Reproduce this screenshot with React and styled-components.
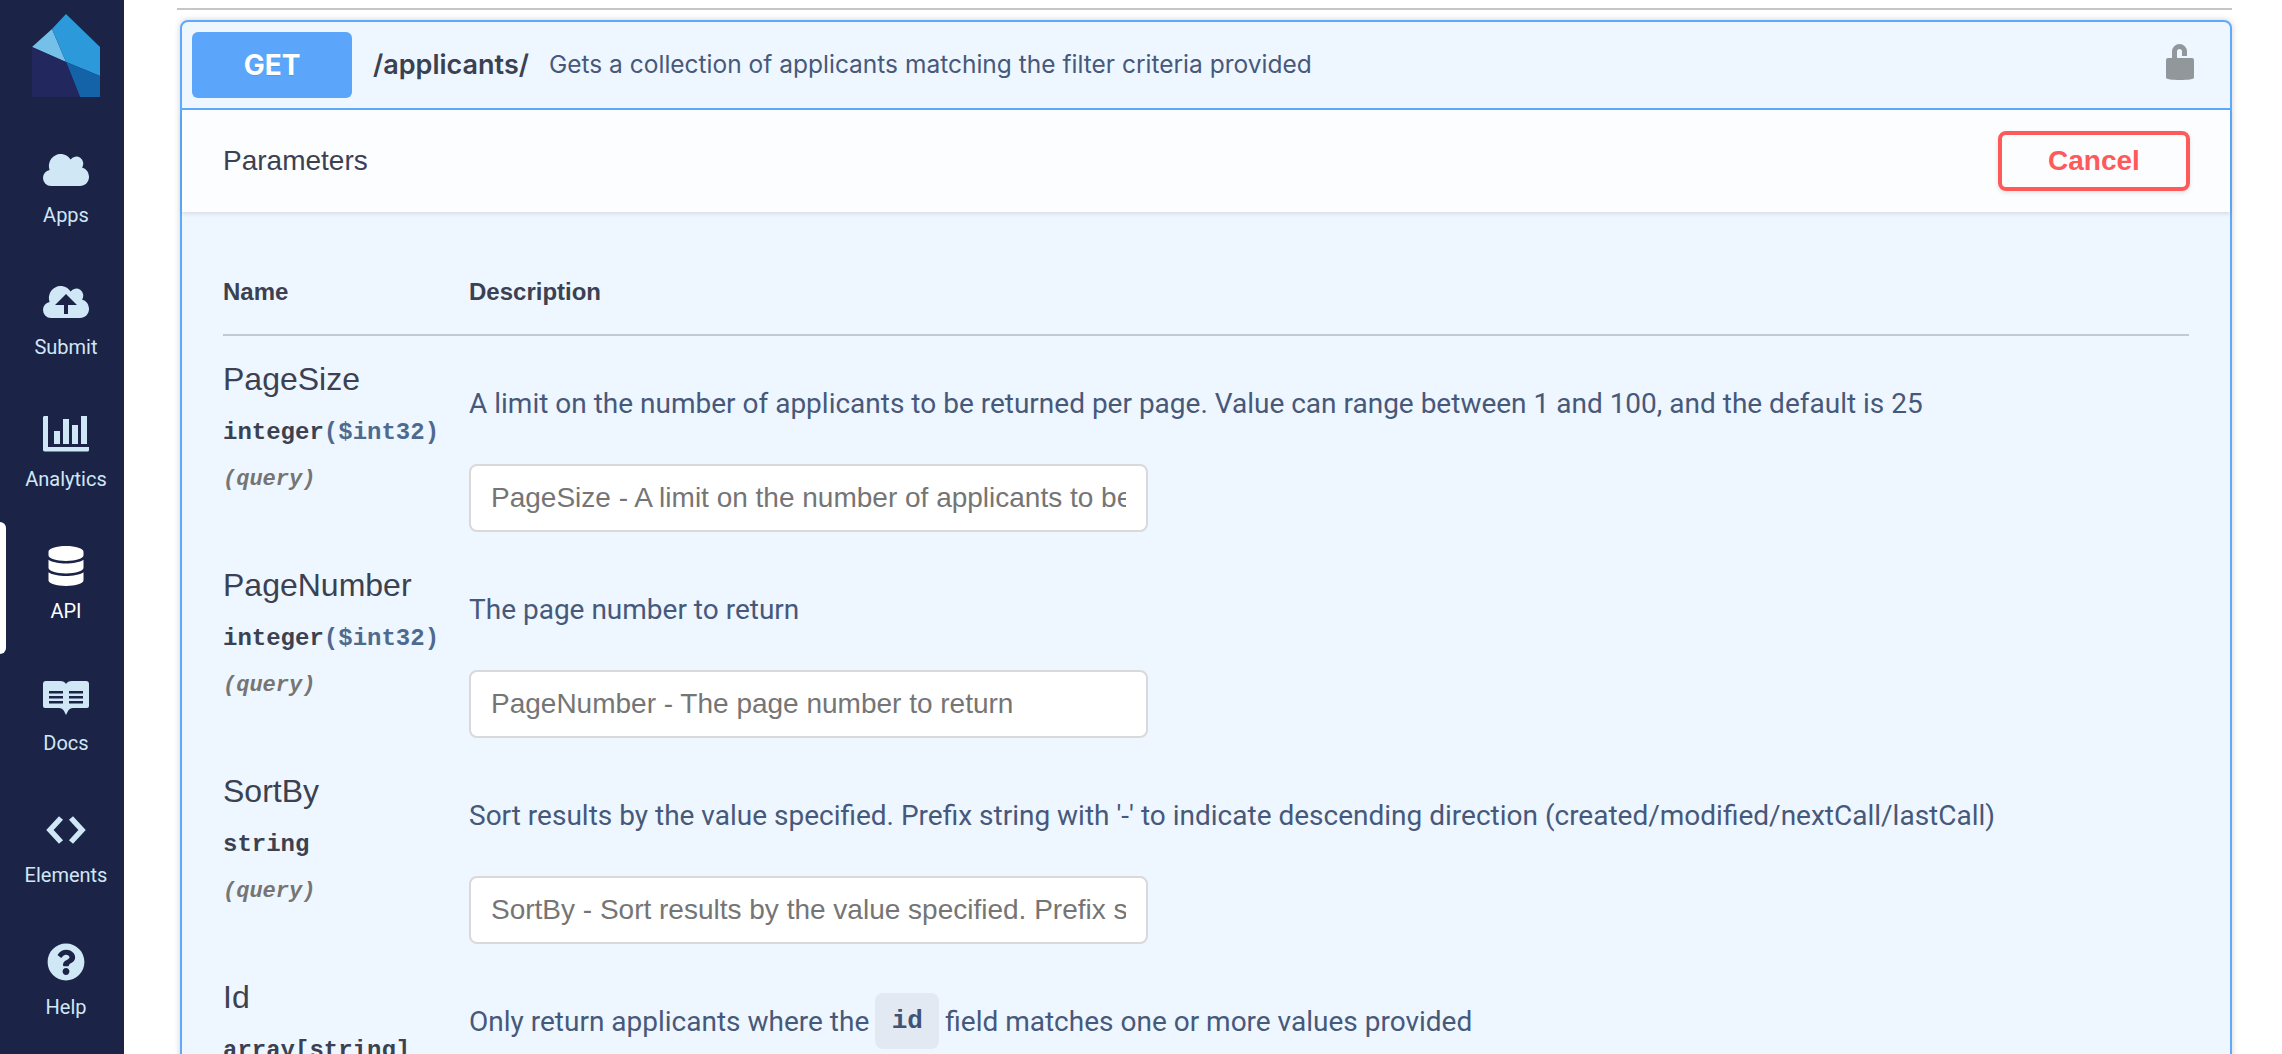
import React from 'react';
import styled, { createGlobalStyle } from 'styled-components';
import { FaDatabase, FaQuestionCircle } from 'react-icons/fa';

const GlobalStyle = createGlobalStyle`
    html, body {
        margin: 0;
        padding: 0;
        height: 100%;
        overflow: hidden;
        background: #fff;
    }
    * {
        box-sizing: border-box;
    }
`

const Page = styled.div`
    display: flex;
    width: 2282px;
    height: 1054px;
    overflow: hidden;
`
const Rail = styled.nav`
    width: 124px;
    flex-shrink: 0;
    background: #1b2347;
    display: flex;
    flex-direction: column;
`
const LogoBox = styled.div`
    height: 126px;
    padding: 14px 0 0 32px;
`
const NavItem = styled.a`
    position: relative;
    height: 132px;
    padding: 24px 0 0 8px;
    display: flex;
    flex-direction: column;
    align-items: center;
    color: ${(p) => (p.$active ? '#ffffff' : '#d0e7f6')};
    font-family: Roboto, sans-serif;
    font-size: 20px;
    &::before {
        content: '';
        display: ${(p) => (p.$active ? 'block' : 'none')};
        position: absolute;
        left: 0;
        top: 0;
        bottom: 0;
        width: 6px;
        background: #fff;
        border-radius: 0 6px 6px 0;
    }
`
const IconBox = styled.div`
    height: 40px;
    display: flex;
    align-items: center;
    justify-content: center;
`
const NavLabel = styled.span`
    margin-top: 13px;
    line-height: 24px;
`
const Main = styled.main`
    flex: 1;
    padding: 8px 50px 0 53px;
    min-width: 0;
`
const TopRule = styled.div`
    height: 2px;
    background: #c6c6c6;
`
const Card = styled.section`
    margin: 10px 0 0 3px;
    height: 1100px;
    border: 2px solid #5fa9fb;
    border-radius: 8px;
    background: #eef6ff;
    box-shadow: 0 0 6px rgba(0, 0, 0, 0.19);
`
const Summary = styled.div`
    height: 88px;
    border-bottom: 2px solid #5fa9fb;
    display: flex;
    align-items: center;
    padding: 0 36px 0 10px;
`
const Method = styled.div`
    width: 160px;
    height: 66px;
    background: #5ba6fb;
    border-radius: 6px;
    color: #fff;
    font-family: Inter, sans-serif;
    font-weight: 700;
    font-size: 28px;
    display: flex;
    align-items: center;
    justify-content: center;
    text-shadow: 0 1px 0 rgba(0, 0, 0, 0.1);
`
const Path = styled.span`
    margin: -2px 0 0 21px;
    font-family: Inter, sans-serif;
    font-weight: 600;
    font-size: 27px;
    color: #3b4151;
`
const SummaryText = styled.span`
    margin: -2px 0 0 20px;
    flex: 1;
    font-family: Inter, sans-serif;
    font-size: 24.5px;
    color: #47597a;
`
const LockBox = styled.div`
    display: flex;
    margin-top: -6px;
`
const SectionBar = styled.div`
    height: 102px;
    background: #fcfdff;
    box-shadow: 0 2px 4px rgba(0, 0, 0, 0.1);
    display: flex;
    align-items: center;
    justify-content: space-between;
    padding: 0 40px 0 41px;
`
const SectionTitle = styled.h4`
    margin: 0;
    font-family: "Liberation Sans", sans-serif;
    font-weight: 400;
    font-size: 28px;
    color: #3b4151;
`
const CancelButton = styled.button`
    width: 192px;
    height: 60px;
    background: transparent;
    border: 4px solid #ff5a5a;
    border-radius: 8px;
    color: #ff5a5a;
    font-family: "Liberation Sans", sans-serif;
    font-weight: 700;
    font-size: 28px;
    box-shadow: 0 2px 4px rgba(0, 0, 0, 0.1);
`
const Body = styled.div`
    padding: 38px 41px 0;
`
const HeadRow = styled.div`
    display: grid;
    grid-template-columns: 246px 1fr;
    height: 86px;
    align-items: center;
    border-bottom: 2px solid #c3c9d1;
    font-family: "Liberation Sans", sans-serif;
    font-weight: 700;
    font-size: 24px;
    color: #3b4151;
`
const ParamRow = styled.div`
    display: grid;
    grid-template-columns: 246px 1fr;
    height: 206px;
    padding-top: 23px;
`
const ParamName = styled.div`
    font-family: "Liberation Sans", sans-serif;
    font-size: 32px;
    line-height: 40px;
    color: #3b4151;
`
const ParamType = styled.div`
    margin-top: 20px;
    font-family: "Liberation Mono", monospace;
    font-weight: 700;
    font-size: 24px;
    line-height: 28px;
    color: #3b4151;
    span {
        color: #4f6a8f;
    }
`
const ParamIn = styled.div`
    margin-top: 19px;
    font-family: "Liberation Mono", monospace;
    font-weight: 700;
    font-style: italic;
    font-size: 22px;
    line-height: 28px;
    color: #757575;
`
const Desc = styled.div`
    margin-top: 18px;
    height: 52px;
    display: flex;
    align-items: center;
    gap: 6px;
    white-space: pre;
    font-family: Roboto, sans-serif;
    font-size: 28px;
    color: #47597a;
`
const Code = styled.code`
    display: inline-flex;
    align-items: center;
    justify-content: center;
    width: 64px;
    height: 56px;
    flex-shrink: 0;
    background: #e3e9f3;
    border-radius: 8px;
    font-family: "Liberation Mono", monospace;
    font-weight: 700;
    font-size: 26px;
    color: #3e5474;
`
const ParamInput = styled.input`
    display: block;
    width: 679px;
    height: 68px;
    margin-top: 35px;
    padding: 0 20px;
    background: #fff;
    border: 2px solid #d9d9d9;
    border-radius: 8px;
    font-family: "Liberation Sans", sans-serif;
    font-size: 28px;
    outline: none;
    &::placeholder {
        color: #757575;
        opacity: 1;
    }
`

const fill = '#d0e7f6';

const Logo = () => (
    <svg width="68" height="83" viewBox="0 0 68 83">
        <polygon points="20,15 34,48 0,33" fill="#74c0e8" />
        <polygon points="34,0 68,33 68,62 34,48 20,15" fill="#2c9ada" />
        <polygon points="34,48 68,62 68,83 48,83" fill="#1462a8" />
        <polygon points="0,33 34,48 48,83 0,83" fill="#22285e" />
    </svg>
)

const CloudShape = () => (
    <path d="M8 32a8 8 0 0 1-8-8 8 8 0 0 1 6.6-8A12 12 0 0 1 19 0a12 12 0 0 1 8.6 5.6A6.5 6.5 0 0 1 39 13.500a9.500 9.500 0 0 1 7 9.500c0 5-4 9-9 9z" fill={fill} />
)

const CloudIcon = () => (
    <svg width="46" height="32" viewBox="0 0 46 32"><CloudShape /></svg>
)

const UploadIcon = () => (
    <svg width="46" height="32" viewBox="0 0 46 32">
        <CloudShape />
        <path d="M21 28V19h-9l11-11 11 11h-9v9z" fill="#1b2347" />
    </svg>
)

const ChartIcon = () => (
    <svg width="46" height="36" viewBox="0 0 46 36" fill={fill}>
        <path d="M1 0h4v31h41v3a1.500 1.500 0 0 1-1.500 1.500H2A2 2 0 0 1 0 34V1z" />
        <rect x="11" y="15" width="6" height="13" />
        <rect x="20" y="3" width="6" height="25" />
        <rect x="29" y="9" width="6" height="19" />
        <rect x="38" y="0" width="6" height="28" />
    </svg>
)

const BookIcon = () => (
    <svg width="46" height="34" viewBox="0 0 46 34">
        <path d="M3 0h14c3 0 5 1 6 3 1-2 3-3 6-3h14a3 3 0 0 1 3 3v22a2 2 0 0 1-2 2H30c-2 0-4 1-5 3l-2 4-2-4c-1-2-3-3-5-3H2a2 2 0 0 1-2-2V3a3 3 0 0 1 3-3z" fill={fill} />
        <path d="M6 10h14v2.500H6zM6 15h14v2.500H6zM6 20h14v2.500H6zM26 10h14v2.500H26zM26 15h14v2.500H26zM26 20h14v2.500H26z" fill="#1b2347" />
    </svg>
)

const CodeIcon = () => (
    <svg width="40" height="28" viewBox="0 0 40 28" fill="none" stroke={fill} strokeWidth="5.500">
        <path d="M15 2 4 14l11 12M25 2l11 12-11 12" />
    </svg>
)

const LockIcon = () => (
    <svg width="28" height="36" viewBox="0 0 28 36">
        <path d="M8.500 15V7.500a5 5 0 0 1 10 0V12" fill="none" stroke="#92979b" strokeWidth="5" />
        <path d="M2 14h24a2 2 0 0 1 2 2v18c0 1-6 2-14 2S0 35 0 34V16a2 2 0 0 1 2-2z" fill="#92979b" />
    </svg>
)

const navItems = [
    { label: 'Apps', icon: <CloudIcon /> },
    { label: 'Submit', icon: <UploadIcon /> },
    { label: 'Analytics', icon: <ChartIcon /> },
    { label: 'API', icon: <FaDatabase size={40} color="#fff" />, active: true },
    { label: 'Docs', icon: <BookIcon /> },
    { label: 'Elements', icon: <CodeIcon /> },
    { label: 'Help', icon: <FaQuestionCircle size={38} color={fill} /> },
];

const params = [
    {
        name: 'PageSize',
        type: 'integer',
        format: '($int32)',
        desc: 'A limit on the number of applicants to be returned per page. Value can range between 1 and 100, and the default is 25',
        placeholder: 'PageSize - A limit on the number of applicants to be returned per page. Value can range between 1 and 100, and the default is 25',
    },
    {
        name: 'PageNumber',
        type: 'integer',
        format: '($int32)',
        desc: 'The page number to return',
        placeholder: 'PageNumber - The page number to return',
    },
    {
        name: 'SortBy',
        type: 'string',
        desc: "Sort results by the value specified. Prefix string with '-' to indicate descending direction (created/modified/nextCall/lastCall)",
        placeholder: "SortBy - Sort results by the value specified. Prefix string with '-' to indicate descending direction (created/modified/nextCall/lastCall)",
    },
];

const App = () => {
    return (
        <Page>
            <GlobalStyle />
            <Rail>
                <LogoBox><Logo /></LogoBox>
                {navItems.map((item) => (
                    <NavItem key={item.label} $active={item.active}>
                        <IconBox>{item.icon}</IconBox>
                        <NavLabel>{item.label}</NavLabel>
                    </NavItem>
                ))}
            </Rail>
            <Main>
                <TopRule />
                <Card>
                    <Summary>
                        <Method>GET</Method>
                        <Path>/applicants/</Path>
                        <SummaryText>Gets a collection of applicants matching the filter criteria provided</SummaryText>
                        <LockBox><LockIcon /></LockBox>
                    </Summary>
                    <SectionBar>
                        <SectionTitle>Parameters</SectionTitle>
                        <CancelButton>Cancel</CancelButton>
                    </SectionBar>
                    <Body>
                        <HeadRow>
                            <div>Name</div>
                            <div>Description</div>
                        </HeadRow>
                        {params.map((p) => (
                            <ParamRow key={p.name}>
                                <div>
                                    <ParamName>{p.name}</ParamName>
                                    <ParamType>{p.type}{p.format && <span>{p.format}</span>}</ParamType>
                                    <ParamIn>(query)</ParamIn>
                                </div>
                                <div>
                                    <Desc>{p.desc}</Desc>
                                    <ParamInput placeholder={p.placeholder} readOnly />
                                </div>
                            </ParamRow>
                        ))}
                        <ParamRow>
                            <div>
                                <ParamName>Id</ParamName>
                                <ParamType>array[string]</ParamType>
                            </div>
                            <div>
                                <Desc>Only return applicants where the<Code>id</Code>field matches one or more values provided</Desc>
                            </div>
                        </ParamRow>
                    </Body>
                </Card>
            </Main>
        </Page>
    );
};

export default App;
